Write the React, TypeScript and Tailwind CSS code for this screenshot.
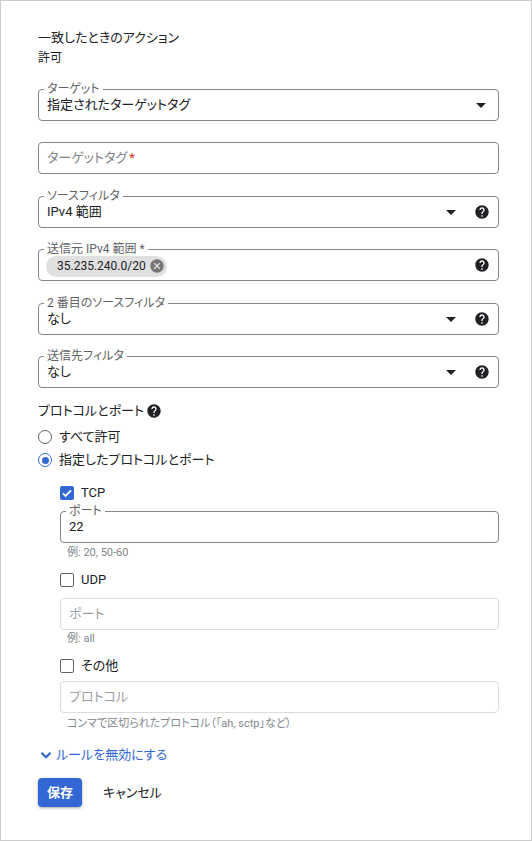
import type { ReactNode } from 'react'

const FONT = "font-['Roboto','Noto_Sans_CJK_JP',sans-serif] [font-feature-settings:'palt']"

function HelpIcon({ className = '' }: { className?: string }) {
  return (
    <svg viewBox="0 0 24 24" className={`w-[16px] h-[16px] shrink-0 ${className}`} fill="#202124">
      <path d="M12 2C6.48 2 2 6.48 2 12s4.48 10 10 10 10-4.48 10-10S17.52 2 12 2zm1 17h-2v-2h2v2zm2.07-7.75l-.9.92C13.45 12.9 13 13.5 13 15h-2v-.5c0-1.1.45-2.1 1.17-2.83l1.24-1.26c.37-.36.59-.86.59-1.41 0-1.1-.9-2-2-2s-2 .9-2 2H8c0-2.21 1.79-4 4-4s4 1.790 4 4c0 .88-.36 1.68-.93 2.25z" />
    </svg>
  )
}

function DropArrow() {
  return (
    <svg viewBox="0 0 24 24" className="w-[24px] h-[24px] shrink-0" fill="#202124">
      <path d="M7 10l5 5 5-5z" />
    </svg>
  )
}

function Outlined({
  label,
  children,
  right,
  className = '',
}: {
  label?: ReactNode
  children?: ReactNode
  right?: ReactNode
  className?: string
}) {
  return (
    <div className={`relative h-[32px] rounded-[4px] border border-[#80868b] flex items-center pl-[8px] ${className}`}>
      {label && (
        <span className="absolute -top-[7px] left-[5px] px-[3px] bg-white text-[12px] leading-[12px] text-[#5f6368]">
          {label}
        </span>
      )}
      <div className="flex-1 min-w-0 flex items-center text-[13px] text-[#202124]">{children}</div>
      {right}
    </div>
  )
}

function SelectRight({ help }: { help?: boolean }) {
  if (!help) {
    return (
      <div className="flex items-center pr-[5px]">
        <DropArrow />
      </div>
    )
  }
  return (
    <div className="flex items-center pr-[8px]">
      <DropArrow />
      <HelpIcon className="ml-[11px]" />
    </div>
  )
}

function Radio({ checked, label }: { checked?: boolean; label: string }) {
  return (
    <div className="flex items-center h-[20px]">
      <span
        className={`w-[14px] h-[14px] rounded-full border-[1.5px] flex items-center justify-center ${
          checked ? 'border-[#3367d6]' : 'border-[#5f6368]'
        }`}
      >
        {checked && <span className="w-[7px] h-[7px] rounded-full bg-[#3367d6]" />}
      </span>
      <span className="ml-[7px] text-[13px] text-[#202124]">{label}</span>
    </div>
  )
}

function Checkbox({ checked, label }: { checked?: boolean; label: string }) {
  return (
    <div className="flex items-center h-[20px]">
      {checked ? (
        <span className="w-[14px] h-[14px] rounded-[2px] bg-[#3367d6] flex items-center justify-center">
          <svg viewBox="0 0 24 24" className="w-[14px] h-[14px]" fill="none" stroke="white" strokeWidth="3">
            <path d="M5 12.5l4.5 4.5L19 7.5" />
          </svg>
        </span>
      ) : (
        <span className="w-[14px] h-[14px] rounded-[2px] border-[1.5px] border-[#5f6368]" />
      )}
      <span className="ml-[7px] text-[13px] text-[#202124]">{label}</span>
    </div>
  )
}

function Hint({ children, className = '' }: { children: ReactNode; className?: string }) {
  return <div className={`pl-[7px] text-[11px] leading-[14px] text-[#80868b] ${className}`}>{children}</div>
}

export default function App() {
  return (
    <div className={`w-[532px] h-[841px] bg-white border border-[#cccccc] pt-[28px] pl-[37px] pr-[32px] ${FONT}`}>
      <div className="text-[13px] leading-[18px] text-[#202124]">一致したときのアクション</div>
      <div className="mt-[3px] text-[12px] leading-[16px] text-[#202124]">許可</div>

      <Outlined className="mt-[23px]" label="ターゲット" right={<SelectRight />}>
        指定されたターゲットタグ
      </Outlined>

      <Outlined className="mt-[21px]">
        <span className="text-[#80868b]">ターゲットタグ</span>
        <span className="text-[#d93025] ml-[2px]">*</span>
      </Outlined>

      <Outlined className="mt-[22px]" label="ソースフィルタ" right={<SelectRight help />}>
        IPv4 範囲
      </Outlined>

      <Outlined
        className="mt-[21px]"
        label="送信元 IPv4 範囲 *"
        right={
          <div className="flex items-center pr-[8px]">
            <HelpIcon />
          </div>
        }
      >
        <span className="-ml-[1px] mt-[2px] h-[21px] flex items-center rounded-full bg-[#e0e0e0] pl-[11px] pr-[2px] text-[12px] text-[#202124]">
          35.235.240.0/20
          <svg viewBox="0 0 24 24" className="w-[16px] h-[16px] ml-[3px]" fill="#757575">
            <path d="M12 2C6.47 2 2 6.47 2 12s4.47 10 10 10 10-4.47 10-10S17.53 2 12 2zm5 13.59L15.59 17 12 13.41 8.41 17 7 15.59 10.59 12 7 8.41 8.41 7 12 10.59 15.59 7 17 8.41 13.41 12 17 15.59z" />
          </svg>
        </span>
      </Outlined>

      <Outlined className="mt-[22px]" label="2 番目のソースフィルタ" right={<SelectRight help />}>
        なし
      </Outlined>

      <Outlined className="mt-[21px]" label="送信先フィルタ" right={<SelectRight help />}>
        なし
      </Outlined>

      <div className="mt-[14px] flex items-center text-[13px] leading-[18px] text-[#202124]">
        プロトコルとポート
        <HelpIcon className="ml-[2px]" />
      </div>

      <div className="mt-[7px]">
        <Radio label="すべて許可" />
      </div>
      <div className="mt-[3px]">
        <Radio checked label="指定したプロトコルとポート" />
      </div>

      <div className="ml-[22px]">
        <div className="mt-[13px]">
          <Checkbox checked label="TCP" />
        </div>
        <Outlined className="mt-[8px]" label="ポート">
          22
        </Outlined>
        <Hint className="mt-[3px]">例: 20, 50-60</Hint>

        <div className="mt-[10px]">
          <Checkbox label="UDP" />
        </div>
        <div className="mt-[8px] h-[32px] rounded-[4px] border border-[#dadce0] flex items-center pl-[8px] text-[13px] text-[#9aa0a6]">
          ポート
        </div>
        <Hint className="mt-[2px]">例: all</Hint>

        <div className="mt-[10px]">
          <Checkbox label="その他" />
        </div>
        <div className="mt-[5px] h-[32px] rounded-[4px] border border-[#dadce0] flex items-center pl-[8px] text-[13px] text-[#9aa0a6]">
          プロトコル
        </div>
        <Hint className="mt-[4px]">コンマで区切られたプロトコル（「ah, sctp」など）</Hint>
      </div>

      <div className="mt-[14px] flex items-center h-[20px] text-[13px] text-[#3367d6]">
        <svg viewBox="0 0 24 24" className="w-[18px] h-[18px] -ml-[1px]" fill="none" stroke="#3367d6" strokeWidth="3">
          <path d="M6 9l6 6 6-6" />
        </svg>
        <span className="ml-[1px]">ルールを無効にする</span>
      </div>

      <div className="mt-[13px] flex items-center">
        <button className="h-[29px] w-[44px] rounded-[4px] bg-[#3367d6] text-white text-[13px] font-bold shadow-[0_1px_3px_rgba(0,0,0,0.35)]">
          保存
        </button>
        <button className="ml-[21px] text-[13px] text-[#202124]">キャンセル</button>
      </div>
    </div>
  )
}
